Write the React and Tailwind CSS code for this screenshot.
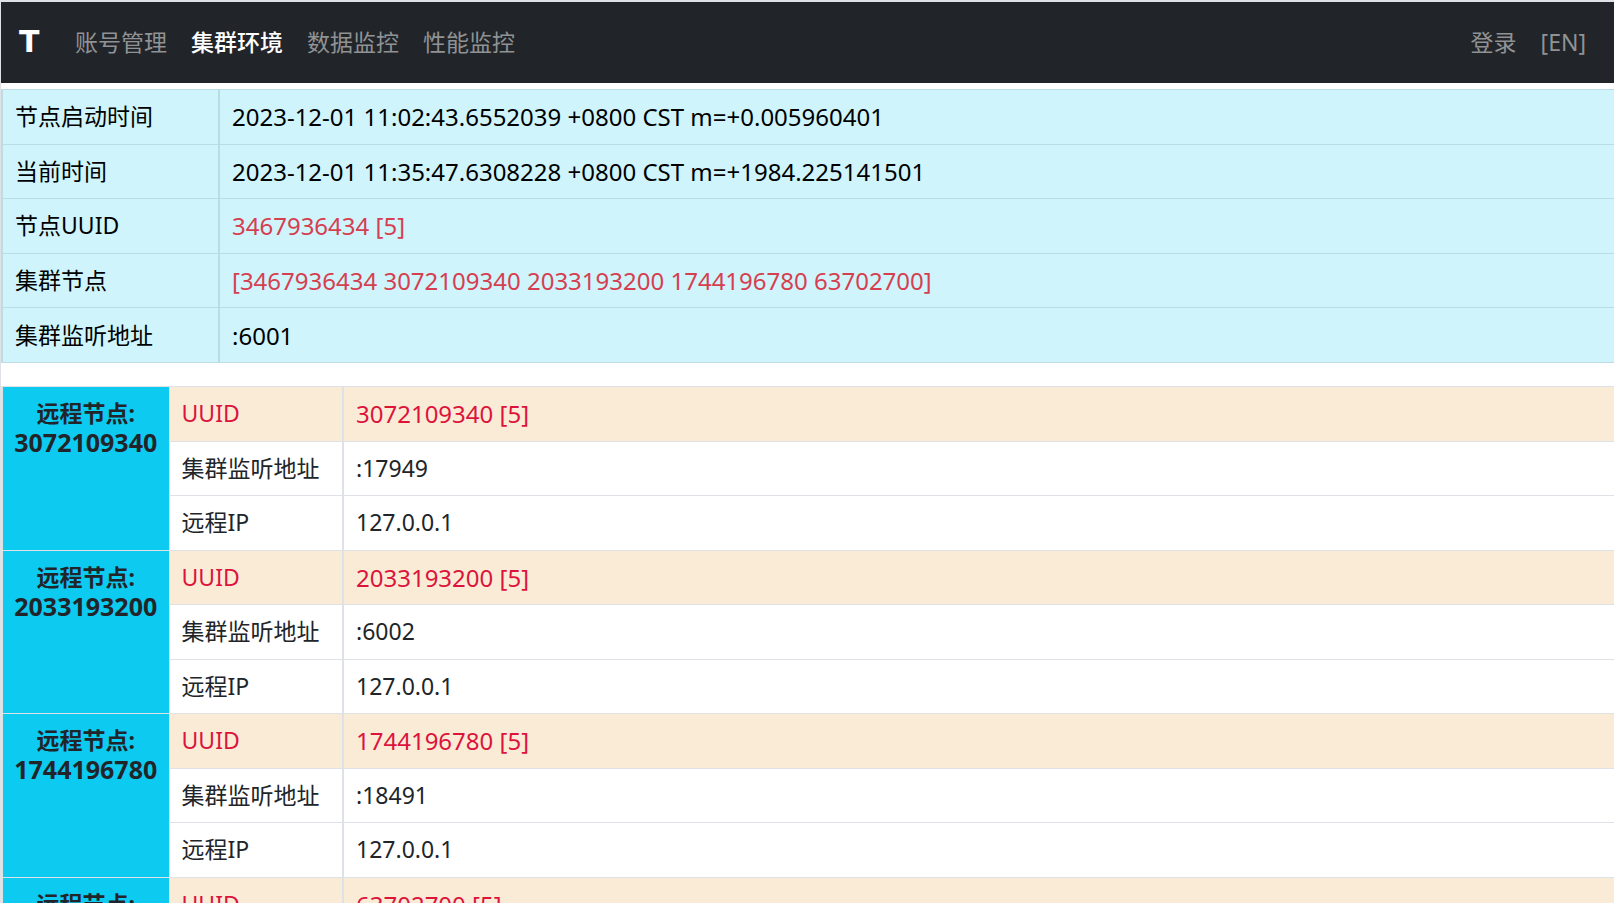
const NAV_ITEMS = [
  { label: '账号管理', href: '#account' },
  { label: '集群环境', href: '#cluster', active: true },
  { label: '数据监控', href: '#data' },
  { label: '性能监控', href: '#performance' },
];

const NODE_INFO = [
  { label: '节点启动时间', value: '2023-12-01 11:02:43.6552039 +0800 CST m=+0.005960401' },
  { label: '当前时间', value: '2023-12-01 11:35:47.6308228 +0800 CST m=+1984.225141501' },
  { label: '节点UUID', value: '3467936434 [5]', highlight: true },
  { label: '集群节点', value: '[3467936434 3072109340 2033193200 1744196780 63702700]', highlight: true },
  { label: '集群监听地址', value: ':6001' },
];

const REMOTE_NODES = [
  { uuid: '3072109340', listen: ':17949', ip: '127.0.0.1' },
  { uuid: '2033193200', listen: ':6002', ip: '127.0.0.1' },
  { uuid: '1744196780', listen: ':18491', ip: '127.0.0.1' },
  { uuid: '63702700', listen: ':18492', ip: '127.0.0.1' },
];

function Navbar() {
  return (
    <nav className="flex items-center bg-[#212529] pl-[18px] pr-7 pb-[2px] h-[81px] text-[23px] leading-[30px] text-[#909294]">
      <a href="#home" className="w-14 font-['DejaVu_Sans',sans-serif] text-[30px] font-bold text-white">T</a>
      <ul className="flex flex-1 gap-6">
        {NAV_ITEMS.map((item) => (
          <li key={item.label}>
            <a href={item.href} className={item.active ? 'font-medium text-white' : 'hover:text-white'}>{item.label}</a>
          </li>
        ))}
      </ul>
      <div className="flex gap-6">
        <a href="#login" className="hover:text-white">登录</a>
        <a href="#en" className="hover:text-white">[EN]</a>
      </div>
    </nav>
  );
}

function NodeInfoTable() {
  return (
    <table className="w-full h-[274px] border-collapse bg-[#cff4fc] text-black">
      <tbody>
        {NODE_INFO.map((row) => (
          <tr key={row.label}>
            <td className="w-[217px] border border-x-2 border-[#badce3] px-3 py-3">{row.label}</td>
            <td className={`border-y border-[#badce3] px-3 py-3 text-[24px] leading-[29px] ${row.highlight ? 'text-[#d63f50]' : ''}`}>{row.value}</td>
          </tr>
        ))}
      </tbody>
    </table>
  );
}

function RemoteNodeRows({ node }) {
  return (
    <tbody>
      <tr className="bg-[#faebd7] text-[#dc143c]">
        <th rowSpan={3} className="w-[167px] border border-l-2 border-[#dee2e6] bg-[#0dcaf0] px-2 py-3 align-top leading-[29px] font-bold text-[#212529]">
          远程节点:<br />
          <span className="text-[25px] leading-[29px]">{node.uuid}</span>
        </th>
        <td className="w-[174px] border border-r-2 border-[#dee2e6] px-3 py-3">UUID</td>
        <td className="border-y border-[#dee2e6] px-3 py-3 text-[24px] leading-[29px]">{node.uuid} [5]</td>
      </tr>
      <tr>
        <td className="border border-r-2 border-[#dee2e6] px-3 py-3">集群监听地址</td>
        <td className="border-y border-[#dee2e6] px-3 py-3">{node.listen}</td>
      </tr>
      <tr>
        <td className="border border-r-2 border-[#dee2e6] px-3 py-3">远程IP</td>
        <td className="border-y border-[#dee2e6] px-3 py-3">{node.ip}</td>
      </tr>
    </tbody>
  );
}

export default function App() {
  return (
    <div className="h-screen overflow-hidden border-t-2 border-l border-[#dee2e6] bg-white font-['Noto_Sans','Noto_Sans_CJK_SC',sans-serif] text-[23px] leading-[29px] text-[#212529]">
      <Navbar />
      <main className="flex flex-col gap-[23px] pt-[6px]">
        <NodeInfoTable />
        <table className="w-full h-[655px] border-collapse">
          {REMOTE_NODES.map((node) => (
            <RemoteNodeRows key={node.uuid} node={node} />
          ))}
        </table>
      </main>
    </div>
  );
}
